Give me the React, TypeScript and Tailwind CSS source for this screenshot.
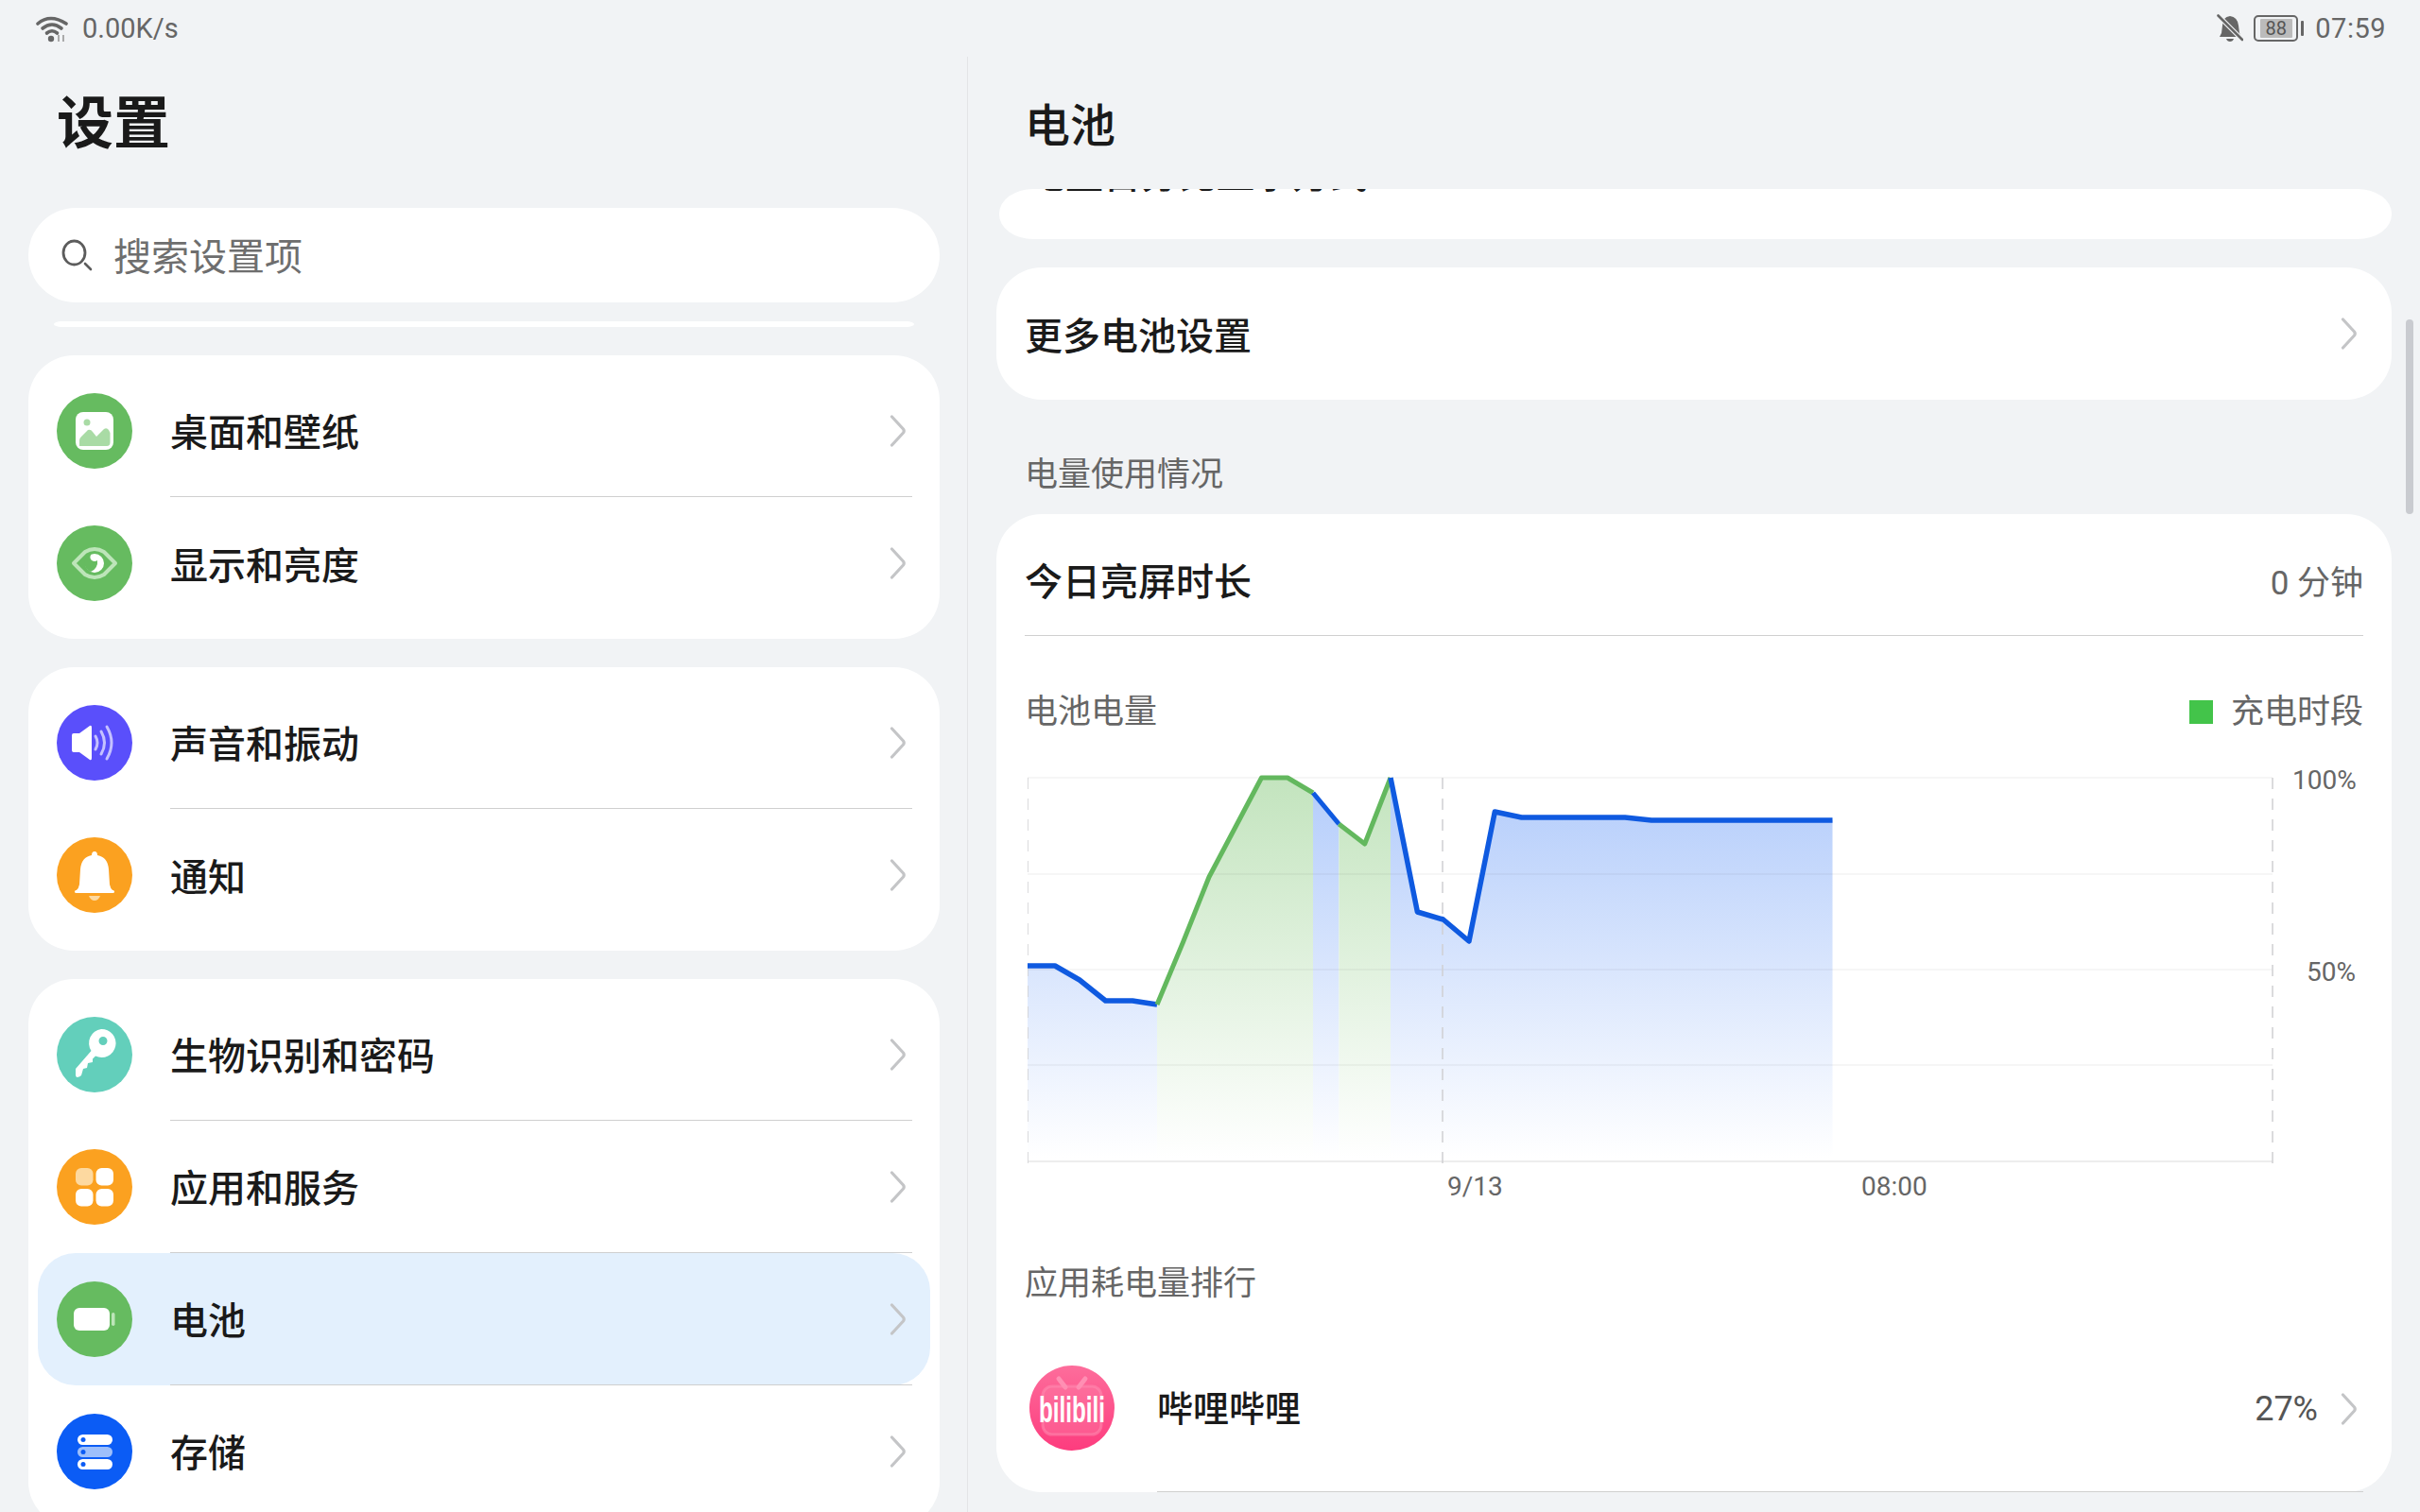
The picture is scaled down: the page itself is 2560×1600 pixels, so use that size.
import { ReactNode } from 'react';

const Chevron = ({ className = '' }: { className?: string }) => (
  <svg width="18" height="34" viewBox="0 0 18 34" fill="none" className={`shrink-0 ${className}`}>
    <path d="M2.5 2 L14.5 15 Q16 17 14.5 19 L2.5 32" stroke="#c4c5c7" strokeWidth="3.2" strokeLinecap="round" strokeLinejoin="round" />
  </svg>
);

const IconCircle = ({ color, children }: { color: string; children: ReactNode }) => (
  <svg width="80" height="80" viewBox="0 0 80 80" className="shrink-0">
    <circle cx="40" cy="40" r="40" fill={color} />
    {children}
  </svg>
);

const WallpaperIcon = () => (
  <IconCircle color="#66bb60">
    <rect x="20" y="20" width="40" height="40" rx="8" fill="#fff" />
    <circle cx="32" cy="31" r="3.5" fill="#a9dba5" />
    <path d="M24 56 V50 Q24 48 26 46 L33 39 Q36 38 38 41 L42 46 L50 38 Q53 36 55 39 L56.5 42 V52 Q56.5 56 53 56 Z" fill="#a9dba5" />
  </IconCircle>
);

const EyeIcon = () => (
  <IconCircle color="#66bb60">
    <path d="M18 40 L30 28 Q40 22 50 28 L62 40 L50 52 Q40 58 30 52 Z" fill="none" stroke="#bde5b9" strokeWidth="4" strokeLinejoin="round" />
    <circle cx="40" cy="40" r="10" fill="#fff" />
    <path d="M37 30 A10 10 0 0 0 36 49 A11 11 0 0 0 43 37 A4 4 0 0 1 37 30 Z" fill="#66bb60" />
  </IconCircle>
);

const SoundIcon = () => (
  <IconCircle color="#5a4ffb">
    <path d="M16 32 Q16 30 18 30 H24 L35 22 Q37 21 37 24 V56 Q37 59 35 58 L24 50 H18 Q16 50 16 48 Z" fill="#fff" />
    <path d="M41 33 Q45 40 41 47" fill="none" stroke="#c5c1ff" strokeWidth="3" strokeLinecap="round" />
    <path d="M47 28 Q54 40 47 52" fill="none" stroke="#c5c1ff" strokeWidth="3" strokeLinecap="round" />
    <path d="M53 23 Q63 40 53 57" fill="none" stroke="#c5c1ff" strokeWidth="3" strokeLinecap="round" />
  </IconCircle>
);

const BellIcon = () => (
  <IconCircle color="#fba120">
    <path d="M37 19 Q37 15 40 15 Q43 15 43 19 Q54 21 55 34 L56 50 Q56.500 54 60 57 H20 Q23.500 54 24 50 L25 34 Q26 21 37 19 Z" fill="#fff" />
    <rect x="19" y="56" width="42" height="3" rx="1.500" fill="#fff" />
    <path d="M34 62 H46 Q44 67 40 67 Q36 67 34 62 Z" fill="#fdd9a0" />
  </IconCircle>
);

const KeyIcon = () => (
  <IconCircle color="#63cfbb">
    <path fillRule="evenodd" d="M47 13 A15 15 0 1 1 41 41.500 L38 44.500 L38 48 L33 49 L32 54 L28 55 L26 62 Q24 64 21 64 L20 62 V55 L36.500 36 A15 15 0 0 1 47 13 Z M49 21 A4.500 4.500 0 1 0 49 30 A4.500 4.500 0 0 0 49 21 Z" fill="#fff" />
  </IconCircle>
);

const AppsIcon = () => (
  <IconCircle color="#fba120">
    <rect x="20" y="20" width="18.500" height="18.500" rx="6" fill="#fdd9a0" />
    <rect x="41.500" y="20" width="18.500" height="18.500" rx="6" fill="#fff" />
    <rect x="20" y="42" width="18.500" height="18.500" rx="6" fill="#fff" />
    <rect x="41.500" y="42" width="18.500" height="18.500" rx="6" fill="#fff" />
  </IconCircle>
);

const BatteryIcon = () => (
  <IconCircle color="#66bb60">
    <rect x="18" y="28" width="38" height="24" rx="6" fill="#fff" />
    <rect x="58" y="33" width="3.500" height="14" rx="1.700" fill="#bde5b9" />
  </IconCircle>
);

const StorageIcon = () => (
  <IconCircle color="#0b5cf5">
    <rect x="22" y="22" width="37" height="11" rx="5.500" fill="#fff" />
    <rect x="22" y="35" width="37" height="11" rx="5.500" fill="#9dbffb" />
    <rect x="22" y="48" width="37" height="11" rx="5.500" fill="#fff" />
    <circle cx="28" cy="27.500" r="2.500" fill="#0b5cf5" />
    <circle cx="28" cy="40.500" r="2.500" fill="#0b5cf5" />
    <circle cx="28" cy="53.500" r="2.500" fill="#0b5cf5" />
  </IconCircle>
);

const BilibiliIcon = () => (
  <svg width="90" height="90" viewBox="0 0 90 90" className="mt-[2px] shrink-0">
    <defs>
      <linearGradient id="bili" x1="0" y1="0" x2="0" y2="1">
        <stop offset="0" stopColor="#fd6d9b" />
        <stop offset="1" stopColor="#fd3c7e" />
      </linearGradient>
    </defs>
    <circle cx="45" cy="45" r="45" fill="url(#bili)" />
    <path d="M31 14 L38 23 M59 14 L52 23" stroke="#ff8fb3" strokeWidth="5" strokeLinecap="round" />
    <rect x="14" y="22" width="62" height="51" rx="10" fill="#ff8cb0" fillOpacity="0.3" stroke="#ff8fb3" strokeOpacity="0.5" strokeWidth="3" />
    <text x="10" y="60" textLength="70" lengthAdjust="spacingAndGlyphs" fontFamily="'Liberation Sans', sans-serif" fontWeight="700" fontSize="38" fill="#fff">bilibili</text>
  </svg>
);

const Row = ({ icon, label, active = false, last = false }: { icon: ReactNode; label: string; active?: boolean; last?: boolean }) => (
  <div className={active ? 'mx-[10px] flex h-[140px] items-center rounded-[40px] bg-[#e3f0fd] pl-[20px]' : 'mx-[10px] flex h-[140px] items-center pl-[20px]'}>
    {icon}
    <div className={`ml-[40px] mr-[19px] flex h-full flex-1 items-center justify-between pr-[6px] ${last ? '' : 'border-b border-[#cfcfcf]'}`}>
      <span className="pt-[7px] text-[40px] font-medium leading-none text-[#1a1a1a]">{label}</span>
      <Chevron />
    </div>
  </div>
);

const SidePane = () => (
  <div className="w-[1024px] shrink-0 overflow-hidden border-r border-[#e3e4e6] pl-[30px] pr-[29px]">
    <div className="flex h-[140px] items-center pl-[30px] pt-[4px]">
      <span className="text-[60px] font-semibold leading-none text-[#1a1a1a]">设置</span>
    </div>
    <div className="mt-[20px] flex h-[100px] items-center rounded-[50px] bg-white pl-[34px]">
      <svg width="34" height="34" viewBox="0 0 34 34" fill="none" className="shrink-0">
        <ellipse cx="14.500" cy="14.500" rx="11.500" ry="12.500" stroke="#5c5c5c" strokeWidth="2.800" />
        <path d="M26 26 L32 32" stroke="#5c5c5c" strokeWidth="2.600" strokeLinecap="round" />
      </svg>
      <span className="ml-[22px] pt-[6px] text-[40px] leading-none text-[#6e6e6e]">搜索设置项</span>
    </div>
    <div className="mx-[27px] mt-[20px] h-[6px] rounded-[16px_16px_16px_16px/6px_6px_6px_6px] bg-white" />
    <div className="mt-[30px] rounded-[48px] bg-white py-[10px]">
      <Row icon={<WallpaperIcon />} label="桌面和壁纸" />
      <Row icon={<EyeIcon />} label="显示和亮度" last />
    </div>
    <div className="mt-[30px] rounded-[48px] bg-white py-[10px]">
      <Row icon={<SoundIcon />} label="声音和振动" />
      <Row icon={<BellIcon />} label="通知" last />
    </div>
    <div className="mt-[30px] rounded-[48px] bg-white py-[10px]">
      <Row icon={<KeyIcon />} label="生物识别和密码" />
      <Row icon={<AppsIcon />} label="应用和服务" />
      <Row icon={<BatteryIcon />} label="电池" active />
      <Row icon={<StorageIcon />} label="存储" />
    </div>
  </div>
);

const BatteryChart = () => {
  const grid = [823, 925, 1026, 1127];
  const stroke = 'round';
  return (
    <svg width="1320" height="426" viewBox="1087 815 1320 426" className="ml-[33px] block">
      <defs>
        <linearGradient id="blueFill" gradientUnits="userSpaceOnUse" x1="0" y1="823" x2="0" y2="1225">
          <stop offset="0" stopColor="#b3ccfb" />
          <stop offset="1" stopColor="#ffffff" />
        </linearGradient>
        <linearGradient id="greenFill" gradientUnits="userSpaceOnUse" x1="0" y1="823" x2="0" y2="1225">
          <stop offset="0" stopColor="#c3e4be" />
          <stop offset="1" stopColor="#ffffff" />
        </linearGradient>
      </defs>
      <path d="M1087 1022 H1116 L1142 1037 L1169.500 1059 H1198 L1224 1063 V1225 H1087 Z" fill="url(#blueFill)" />
      <path d="M1224 1063 L1251.500 997 L1279 928 L1307 875 L1334.500 823 H1362 L1389 839 V1225 H1224 Z" fill="url(#greenFill)" />
      <path d="M1389 839 L1416.400 872 V1225 H1389 Z" fill="url(#blueFill)" />
      <path d="M1416.400 872 L1443.700 893 L1471 823 V1225 H1416.400 Z" fill="url(#greenFill)" />
      <path d="M1471 823 L1499.400 965 L1526.700 973 L1554 996 L1581.300 859 L1609.600 865 H1719 L1747 868 H1938.500 V1225 H1471 Z" fill="url(#blueFill)" />
      {grid.map((y) => (
        <line key={y} x1="1087" x2="2404" y1={y} y2={y} stroke="#000" strokeOpacity="0.05" strokeWidth="1.500" />
      ))}
      <line x1="1087" x2="2404" y1="1229" y2="1229" stroke="#000" strokeOpacity="0.07" strokeWidth="2" />
      {[1087, 1526, 2404].map((x) => (
        <line key={x} x1={x} x2={x} y1="823" y2="1239" stroke="#cfd0d2" strokeWidth="1.500" strokeDasharray="12 10" />
      ))}
      <path d="M1087 1022 H1116 L1142 1037 L1169.500 1059 H1198 L1224 1063" fill="none" stroke="#0f5ae0" strokeWidth="5.500" strokeLinejoin={stroke} />
      <path d="M1224 1063 L1251.500 997 L1279 928 L1307 875 L1334.500 823 H1362 L1389 839" fill="none" stroke="#63b85e" strokeWidth="5" strokeLinejoin={stroke} />
      <path d="M1389 839 L1416.400 872" fill="none" stroke="#0f5ae0" strokeWidth="5" />
      <path d="M1416.400 872 L1443.700 893 L1471 823" fill="none" stroke="#63b85e" strokeWidth="5" strokeLinejoin={stroke} />
      <path d="M1471 823 L1499.400 965 L1526.700 973 L1554 996 L1581.300 859 L1609.600 865 H1719 L1747 868 H1938.500" fill="none" stroke="#0f5ae0" strokeWidth="5.500" strokeLinejoin={stroke} />
    </svg>
  );
};

const DetailPane = () => (
  <div className="relative flex-1 overflow-hidden pl-[30px] pr-[30px]">
    <div className="flex h-[140px] items-center pl-[30px] pt-[8px]">
      <span className="text-[48px] font-medium leading-none text-[#1a1a1a]">电池</span>
    </div>
    <div className="ml-[3px] h-[53px] overflow-hidden rounded-[36px/26px] bg-white pl-[30px]">
      <div className="-mt-[34px] text-[40px] font-medium leading-[40px] text-[#1a1a1a]">电量百分比显示方式</div>
    </div>
    <div className="mt-[30px] flex h-[140px] items-center justify-between rounded-[48px] bg-white pl-[30px] pr-[36px]">
      <span className="pt-[8px] text-[40px] font-medium leading-none text-[#1a1a1a]">更多电池设置</span>
      <Chevron />
    </div>
    <div className="flex h-[121px] items-center pl-[30px] pt-[38px] text-[35px] leading-none text-[#666666]">电量使用情况</div>
    <div className="rounded-[48px] bg-white">
      <div className="ml-[30px] mr-[30px] flex h-[129px] items-center justify-between border-b border-[#cfcfcf] pt-[18px]">
        <span className="text-[40px] font-medium leading-none text-[#1a1a1a]">今日亮屏时长</span>
        <span className="text-[35px] leading-none text-[#666666]">0 分钟</span>
      </div>
      <div className="ml-[30px] mr-[30px] flex h-[142px] items-center justify-between pt-[18px] text-[35px] leading-none text-[#666666]">
        <span>电池电量</span>
        <span className="flex items-center">
          <span className="mr-[19px] size-[25px] bg-[#43c44a]" />
          充电时段
        </span>
      </div>
      <div className="relative">
        <BatteryChart />
        <span className="absolute left-[1371px] top-[-3px] text-[28px] leading-[28px] text-[#666666]">100%</span>
        <span className="absolute left-[1386px] top-[200px] text-[28px] leading-[28px] text-[#666666]">50%</span>
      </div>
      <div className="flex h-[30px] items-center pl-[477px] text-[28px] leading-none text-[#666666]">
        <span className="w-[438px]">9/13</span>
        <span>08:00</span>
      </div>
      <div className="flex h-[172px] items-center pl-[30px] pt-[2px] text-[35px] leading-none text-[#666666]">应用耗电量排行</div>
      <div className="flex pl-[35px] pr-[30px]">
        <BilibiliIcon />
        <div className="ml-[45px] flex h-[136px] flex-1 items-center justify-between border-b border-[#cfcfcf] pb-[40px]">
          <span className="text-[38px] font-medium leading-none text-[#1a1a1a]">哔哩哔哩</span>
          <span className="flex items-center">
            <span className="text-[36px] leading-none text-[#555555]">27%</span>
            <Chevron className="ml-[24px] mr-[6px]" />
          </span>
        </div>
      </div>
    </div>
    <div className="absolute right-[7px] top-[278px] h-[206px] w-[8px] rounded-full bg-[#c9cbd0]" />
  </div>
);

const StatusBar = () => (
  <div className="flex h-[60px] items-center justify-between pl-[38px] pr-[36px] text-[29px] leading-none text-[#666666]">
    <div className="flex items-center">
      <svg width="34" height="30" viewBox="0 0 34 30" fill="none">
        <path d="M2 10 Q15 -1 32 10" stroke="#666" strokeWidth="3.600" strokeLinecap="round" />
        <path d="M7 15 Q17 7 27 15" stroke="#666" strokeWidth="3.600" strokeLinecap="round" />
        <path d="M11.500 20 Q17 15.500 22.500 20" stroke="#666" strokeWidth="3.600" strokeLinecap="round" />
        <circle cx="16" cy="26" r="3.200" fill="#666" />
        <path d="M24 22 V29 M29 29 V22" stroke="#aaa" strokeWidth="2" />
      </svg>
      <span className="ml-[15px]">0.00K/s</span>
    </div>
    <div className="flex items-center">
      <svg width="28" height="30" viewBox="0 0 28 30" fill="none">
        <path d="M14 2 Q22 3 23 12 L24 20 L26 24 H3 L5 20 L6 12 Q6 3 14 2 Z" fill="#666" />
        <path d="M10 26 H18 Q17 29 14 29 Q11 29 10 26 Z" fill="#666" />
        <path d="M1 1 L27 27" stroke="#f1f3f5" strokeWidth="5" />
        <path d="M1.500 1.500 L27 27" stroke="#666" strokeWidth="2.600" strokeLinecap="round" />
      </svg>
      <div className="ml-[11px] flex h-[28px] w-[47px] items-center justify-center rounded-[5px] border-2 border-[#666666]">
        <span className="flex h-[20px] w-[34px] items-center justify-center rounded-[1px] bg-[#bbbbbb] text-[20px] leading-none text-[#555555]">88</span>
      </div>
      <div className="ml-[3px] h-[16px] w-[3px] rounded-[1px] bg-[#666666]" />
      <span className="ml-[12px] tracking-[0.5px]">07:59</span>
    </div>
  </div>
);

export default function App() {
  return (
    <div className="flex h-[1600px] w-[2560px] flex-col overflow-hidden bg-[#f1f3f5] font-['Roboto','Noto_Sans_CJK_SC',sans-serif]">
      <StatusBar />
      <div className="flex min-h-0 flex-1">
        <SidePane />
        <DetailPane />
      </div>
    </div>
  );
}
